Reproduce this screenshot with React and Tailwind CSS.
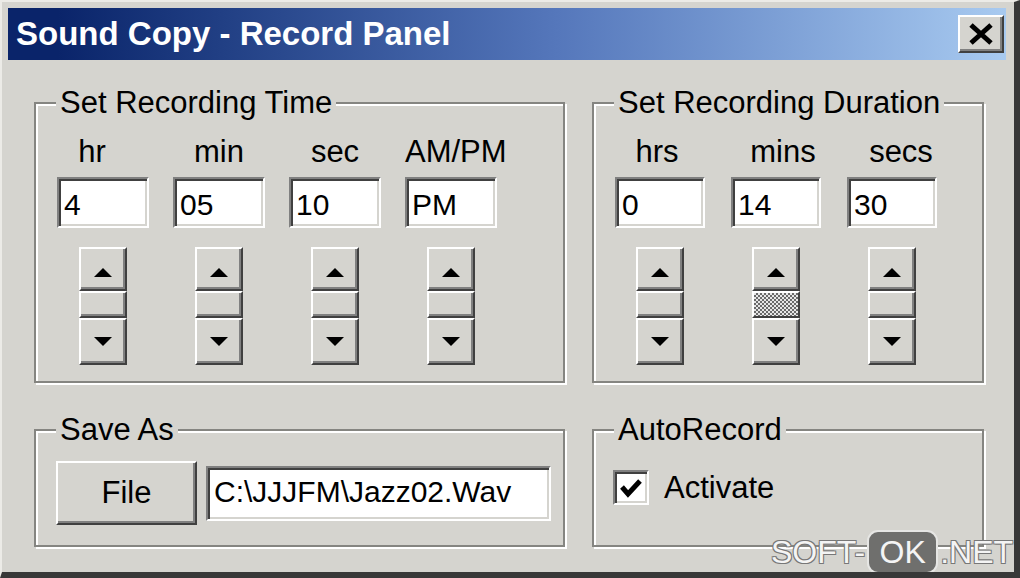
import React from 'react';

const font = { fontFamily: '"Liberation Sans", Arial, sans-serif' };

const raised =
  'border-2 border-t-white border-l-white border-r-[#404040] border-b-[#404040] shadow-[inset_-2px_-2px_0_#808080] bg-[#d5d4cf]';
const sunken =
  'border-2 border-t-[#808080] border-l-[#808080] border-r-white border-b-white shadow-[inset_2px_2px_0_#404040,inset_-2px_-2px_0_#d5d4cf] bg-white';

const ArrowUp = () => (
  <svg width="18" height="9" viewBox="0 0 18 9">
    <polygon points="9,0 18,9 0,9" fill="#000" />
  </svg>
);

const ArrowDown = () => (
  <svg width="18" height="9" viewBox="0 0 18 9">
    <polygon points="0,0 18,0 9,9" fill="#000" />
  </svg>
);

const Spinner = ({ focused }) => (
  <div className="flex flex-col w-[48px]">
    <div className={`h-[44px] flex items-center justify-center pt-[6px] ${raised}`}>
      <ArrowUp />
    </div>
    <div className={`h-[27px] ${raised}`}>
      {focused && (
        <div className="h-full bg-[repeating-conic-gradient(#6a6a6a_0_25%,#e6e6e6_0_50%)] bg-[length:4px_4px]" />
      )}
    </div>
    <div className={`h-[47px] flex items-center justify-center ${raised}`}>
      <ArrowDown />
    </div>
  </div>
);

const Field = ({ label, value, labelClass = '', width, focused }) => (
  <div className={`flex flex-col items-center ${width}`}>
    <div className={`w-full text-center whitespace-nowrap text-[31px] leading-[34px] ${labelClass}`}>{label}</div>
    <div className={`w-full h-[51px] mt-[8px] pl-[5px] pt-[9px] text-[30px] leading-[34px] ${sunken}`}>{value}</div>
    <div className="mt-[19px]">
      <Spinner focused={focused} />
    </div>
  </div>
);

const Group = ({ title, className, children }) => (
  <fieldset
    className={`m-0 p-0 min-w-0 border-2 border-[#858581] shadow-[inset_2px_2px_0_#fff,2px_2px_0_#fff] ${className}`}
  >
    <legend className="ml-[20px] px-[4px] bg-[#d5d4cf] text-[31px] leading-[34px]">{title}</legend>
    {children}
  </fieldset>
);

export default function App() {
  return (
    <div
      className="relative w-[1020px] h-[578px] overflow-hidden bg-[#d5d4cf] text-black pl-[8px] pt-[8px] pr-[8px] border-l-2 border-t-2 border-l-[#ecebe7] border-t-[#ecebe7] border-r-[6px] border-b-[6px] border-r-[#383838] border-b-[#383838]"
      style={font}
    >
      {/* title bar */}
      <div className="h-[52px] -mt-[2px] -ml-[2px] flex items-center justify-between pl-[8px] pr-[2px] bg-linear-to-r from-[#0a246a] from-5% via-[#5577bb] via-55% to-[#a8caf0]">
        <span className="text-white font-bold text-[33px] leading-[38px]">Sound Copy - Record Panel</span>
        <div className={`w-[46px] h-[38px] flex items-center justify-center ${raised}`}>
          <svg width="26" height="22" viewBox="0 0 26 22">
            <path d="M3 2 L23 20 M23 2 L3 20" stroke="#000" strokeWidth="5" />
          </svg>
        </div>
      </div>

      {/* top row */}
      <div className="flex mt-[26px] ml-[24px] gap-[27px]">
        <Group title="Set Recording Time" className="w-[531px] h-[297px]">
          <div className="flex gap-[24px] pl-[21px] pt-[15px]">
            <Field label="hr" value="4" width="w-[92px]" labelClass="pr-[22px]" />
            <Field label="min" value="05" width="w-[92px]" />
            <Field label="sec" value="10" width="w-[92px]" />
            <Field label="AM/PM" value="PM" width="w-[92px]" />
          </div>
        </Group>
        <Group title="Set Recording Duration" className="w-[392px] h-[297px]">
          <div className="flex gap-[26px] pl-[21px] pt-[15px]">
            <Field label="hrs" value="0" width="w-[90px]" labelClass="pr-[6px]" />
            <Field label="mins" value="14" width="w-[90px]" labelClass="pl-[14px]" focused />
            <Field label="secs" value="30" width="w-[90px]" labelClass="pl-[18px]" />
          </div>
        </Group>
      </div>

      {/* bottom row */}
      <div className="flex mt-[30px] ml-[24px] gap-[27px]">
        <Group title="Save As" className="w-[531px] h-[134px]">
          <div className="flex items-center gap-[9px] pl-[20px] pt-[14px]">
            <div className={`w-[141px] h-[64px] flex items-center justify-center text-[31px] ${raised}`}>File</div>
            <div className={`w-[345px] h-[55px] pl-[6px] pt-[7px] text-[30px] leading-[34px] whitespace-nowrap ${sunken}`}>
              C:\JJJFM\Jazz02.Wav
            </div>
          </div>
        </Group>
        <Group title="AutoRecord" className="w-[392px] h-[134px]">
          <div className="flex items-center gap-[15px] pl-[19px] pt-[23px]">
            <div className={`w-[36px] h-[35px] flex items-center justify-center ${sunken}`}>
              <svg width="24" height="22" viewBox="0 0 24 22">
                <path d="M3 10 L9 17 L21 4" stroke="#000" strokeWidth="5" fill="none" />
              </svg>
            </div>
            <span className="text-[31px] leading-[34px]">Activate</span>
          </div>
        </Group>
      </div>

      {/* watermark */}
      <div className="absolute left-[769px] top-[528px] flex items-center text-[32px] leading-[36px] text-[#f4f4f4] [text-shadow:1px_1px_0_#777,-1px_-1px_0_#777,1px_-1px_0_#777,-1px_1px_0_#777]">
        <span>SOFT-</span>
        <span className="mx-[2px] w-[71px] h-[44px] flex items-center justify-center rounded-[11px] bg-[#6f6f6d] border-2 border-[#e6e6e4] [text-shadow:none]">
          OK
        </span>
        <span>.NET</span>
      </div>
    </div>
  );
}
